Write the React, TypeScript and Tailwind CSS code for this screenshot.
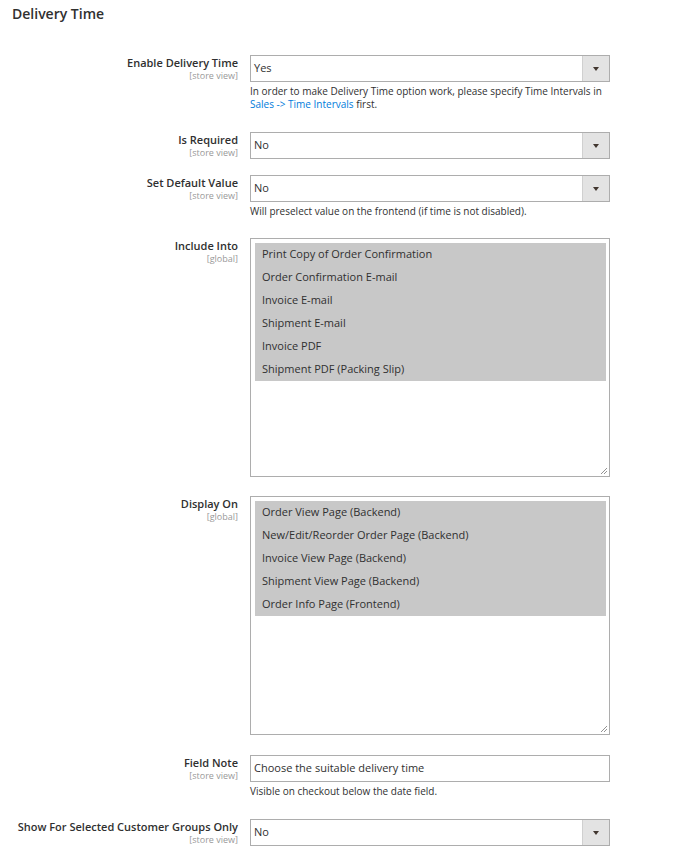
import React from "react";

const font = { fontFamily: '"Open Sans", "Liberation Sans", sans-serif' };

function Label({ title, scope }: { title: string; scope: string }) {
  return (
    <div className="w-[238px] shrink-0 text-right">
      <div className="text-[11px] leading-[15px] font-semibold text-[#303030]">{title}</div>
      <div className="text-[9px] leading-[12px] text-[#999999]">{scope}</div>
    </div>
  );
}

function Select({ value }: { value: string }) {
  return (
    <div className="flex h-[27px] w-[360px] border border-[#adadad] bg-white">
      <div className="flex-1 flex items-center pl-[3px] text-[11px] text-[#303030]">{value}</div>
      <div className="w-[27px] h-full bg-[#e3e3e3] border-l border-[#d0d0d0] flex items-center justify-center">
        <svg width="6" height="4" viewBox="0 0 6 4">
          <path d="M0 0 L6 0 L3 4 Z" fill="#41362f" />
        </svg>
      </div>
    </div>
  );
}

function Multi({ items }: { items: string[] }) {
  return (
    <div className="relative h-[239px] w-[360px] border border-[#adadad] bg-white p-[4px] pr-[3px]">
      <div className="flex flex-col">
        {items.map((it) => (
          <div key={it} className="h-[23px] flex items-center pl-[7px] bg-[#c8c8c8] text-[11px] text-[#303030]">
            {it}
          </div>
        ))}
      </div>
      <svg className="absolute right-[1px] bottom-[1px]" width="8" height="8" viewBox="0 0 8 8">
        <path d="M1 7 L7 1 M4 7 L7 4" stroke="#777" strokeWidth="0.8" />
      </svg>
    </div>
  );
}

function Row({
  title,
  scope,
  children,
  mt,
}: {
  title: string;
  scope: string;
  children: React.ReactNode;
  mt: string;
}) {
  return (
    <div className={`flex gap-[12px] ${mt}`}>
      <Label title={title} scope={scope} />
      <div className="flex flex-col">{children}</div>
    </div>
  );
}

export default function App() {
  return (
    <div style={font} className="bg-white w-[685px] h-[853px] overflow-hidden">
      <div className="pl-[12px] pt-[4px] text-[14px] leading-[20px] font-semibold text-[#303030]">Delivery Time</div>

      <div className="flex flex-col">
        <div className="flex gap-[12px] mt-[31px]">
          <Label title="Enable Delivery Time" scope="[store view]" />
          <div className="flex flex-col">
            <Select value="Yes" />
            <div className="mt-[3px] w-[360px] text-[10px] leading-[13px] text-[#303030]">
              In order to make Delivery Time option work, please specify Time Intervals in{" "}
              <span className="text-[#007bdb]">Sales -&gt; Time Intervals</span> first.
            </div>
          </div>
        </div>

        <Row title="Is Required" scope="[store view]" mt="mt-[21px]">
          <Select value="No" />
        </Row>

        <Row title="Set Default Value" scope="[store view]" mt="mt-[16px]">
          <Select value="No" />
          <div className="mt-[3px] text-[10px] leading-[13px] text-[#303030]">
            Will preselect value on the frontend (if time is not disabled).
          </div>
        </Row>

        <Row title="Include Into" scope="[global]" mt="mt-[20px]">
          <Multi
            items={[
              "Print Copy of Order Confirmation",
              "Order Confirmation E-mail",
              "Invoice E-mail",
              "Shipment E-mail",
              "Invoice PDF",
              "Shipment PDF (Packing Slip)",
            ]}
          />
        </Row>

        <Row title="Display On" scope="[global]" mt="mt-[19px]">
          <Multi
            items={[
              "Order View Page (Backend)",
              "New/Edit/Reorder Order Page (Backend)",
              "Invoice View Page (Backend)",
              "Shipment View Page (Backend)",
              "Order Info Page (Frontend)",
            ]}
          />
        </Row>

        <Row title="Field Note" scope="[store view]" mt="mt-[20px]">
          <div className="h-[27px] w-[360px] border border-[#adadad] bg-white flex items-center pl-[3px] text-[11px] text-[#303030]">
            Choose the suitable delivery time
          </div>
          <div className="mt-[3px] text-[10px] leading-[13px] text-[#303030]">
            Visible on checkout below the date field.
          </div>
        </Row>

        <Row title="Show For Selected Customer Groups Only" scope="[store view]" mt="mt-[21px]">
          <Select value="No" />
        </Row>
      </div>
    </div>
  );
}
